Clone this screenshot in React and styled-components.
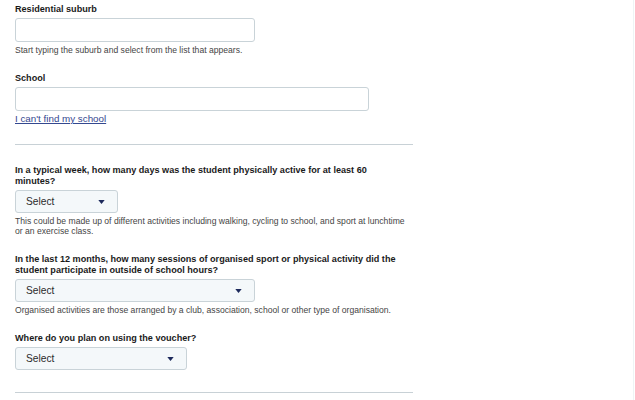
import React from "react";
import styled, { createGlobalStyle } from "styled-components";

const GlobalStyle = createGlobalStyle`
  html, body {
    margin: 0;
    padding: 0;
    background: #ffffff;
  }
  body {
    font-family: "Liberation Sans", Arial, sans-serif;
    color: #1c1c1c;
  }
`;

export default function App() {
  return (
    <>
      <GlobalStyle />
      <Page>
        <Form>
          <Field>
            <Label>Residential suburb</Label>
            <TextInput $width={240} />
            <Hint>Start typing the suburb and select from the list that appears.</Hint>
          </Field>

          <Field>
            <Label>School</Label>
            <TextInput $width={354} />
            <HelpLink href="#">I can't find my school</HelpLink>
          </Field>

          <Divider />

          <Field>
            <Label>
              In a typical week, how many days was the student physically active for at least 60
              <br />
              minutes?
            </Label>
            <SelectBox $width={103}>
              <span>Select</span>
              <Caret />
            </SelectBox>
            <Hint>
              This could be made up of different activities including walking, cycling to school, and sport at lunchtime
              <br />
              or an exercise class.
            </Hint>
          </Field>

          <Field>
            <Label>
              In the last 12 months, how many sessions of organised sport or physical activity did the
              <br />
              student participate in outside of school hours?
            </Label>
            <SelectBox $width={240}>
              <span>Select</span>
              <Caret />
            </SelectBox>
            <Hint>Organised activities are those arranged by a club, association, school or other type of organisation.</Hint>
          </Field>

          <Field $gap={20}>
            <Label>Where do you plan on using the voucher?</Label>
            <SelectBox $width={172}>
              <span>Select</span>
              <Caret />
            </SelectBox>
          </Field>

          <Divider />
        </Form>
      </Page>
    </>
  );
}

function Caret() {
  return (
    <CaretIcon viewBox="0 0 8 5" width="7" height="4">
      <path d="M0 0 H8 L4 5 Z" fill="#1d2a5c" />
    </CaretIcon>
  );
}

const Page = styled.div`
  width: 634px;
  height: 400px;
  border-right: 1px solid #eef4f5;
  box-sizing: border-box;
  overflow: hidden;
`;

const Form = styled.div`
  width: 398px;
  padding: 4px 0 0 15px;
  display: flex;
  flex-direction: column;
`;

const Field = styled.div`
  display: flex;
  flex-direction: column;
  align-items: flex-start;
  margin-bottom: ${(p) => p.$gap || 18}px;
`;

const Label = styled.div`
  font-size: 9.1px;
  font-weight: 700;
  line-height: 11px;
  color: #1a1a1a;
  margin-bottom: 3px;
  white-space: nowrap;
`;

const TextInput = styled.input`
  width: ${(p) => p.$width}px;
  height: 24px;
  box-sizing: border-box;
  border: 1px solid #c9d3d8;
  border-radius: 3px;
  background: #ffffff;
  padding: 0 8px;
  margin: 0;
  outline: none;
`;

const SelectBox = styled.div`
  width: ${(p) => p.$width}px;
  height: 23px;
  box-sizing: border-box;
  border: 1px solid #c9d3d8;
  border-radius: 3px;
  background: #f4f8fa;
  display: flex;
  align-items: center;
  justify-content: space-between;
  padding: 0 12px 0 10px;
  font-size: 10.2px;
  color: #2b2b2b;
`;

const CaretIcon = styled.svg`
  display: block;
`;

const Hint = styled.div`
  font-size: 8.6px;
  line-height: 10px;
  color: #454545;
  margin-top: 3px;
  white-space: nowrap;
`;

const HelpLink = styled.a`
  font-size: 9.8px;
  line-height: 10px;
  color: #34488f;
  text-decoration: underline;
  margin-top: 3px;
`;

const Divider = styled.hr`
  width: 398px;
  margin: 2px 0 20px 0;
  border: none;
  border-top: 1.5px solid #c8d1d6;
`;
